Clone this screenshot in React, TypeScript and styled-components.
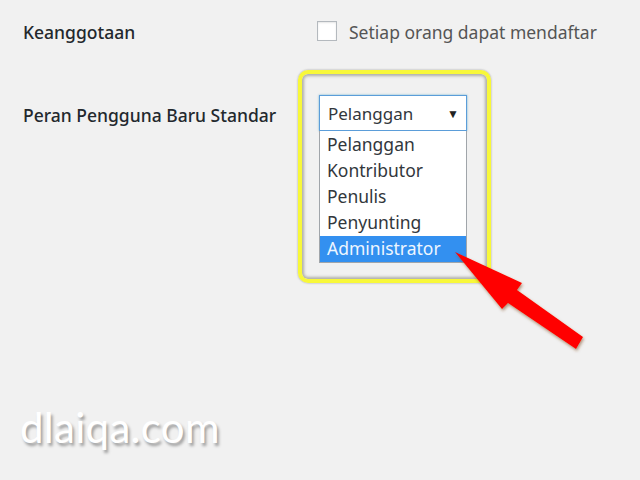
import React from 'react'
import styled, { createGlobalStyle } from 'styled-components'

const GlobalStyle = createGlobalStyle`
   html, body {
      margin: 0;
      padding: 0;
      background: #f1f1f1;
   }
   body {
      width: 640px;
      height: 480px;
      overflow: hidden;
      position: relative;
      font-family: "Noto Sans", "Open Sans", sans-serif;
   }
`

const Page = styled.div`
   position: relative;
   width: 640px;
   height: 480px;
   padding: 20px 0 0 23px;
   box-sizing: border-box;
`

const Row = styled.div<{ $top?: number }>`
   display: grid;
   grid-template-columns: 294px auto;
   align-items: center;
   height: ${(p) => (p.$top ? 36 : 24)}px;
   margin-top: ${(p) => p.$top ?? 0}px;
`

const Label = styled.div<{ $drop?: number }>`
   color: #23282d;
   font-size: 17.5px;
   font-weight: 500;
   line-height: 24px;
   padding-top: ${(p) => p.$drop ?? 0}px;
`

const CheckLabel = styled.label`
   display: flex;
   align-items: center;
   gap: 12px;
   color: #555;
   font-size: 17.5px;
   line-height: 24px;
`

const Checkbox = styled.span`
   width: 18px;
   height: 18px;
   margin-top: -2px;
   border: 1px solid #b4b9be;
   background: #fff;
   box-shadow: inset 0 1px 2px rgba(0, 0, 0, 0.1);
`

const SelectWrap = styled.div`
   position: relative;
   width: 148px;
   margin-left: 2px;

   &::before {
      content: '';
      position: absolute;
      left: -21px;
      top: -25px;
      width: 193px;
      height: 213px;
      box-sizing: border-box;
      border: 4px solid #f8f83a;
      border-radius: 10px;
      box-shadow: inset 0 0 3px 2px rgba(120, 120, 110, 0.55), 0 0 2px rgba(90, 90, 90, 0.6);
   }
`

const Select = styled.div`
   position: relative;
   height: 36px;
   box-sizing: border-box;
   display: flex;
   align-items: center;
   justify-content: space-between;
   padding: 0 7px 0 8px;
   border: 1px solid #5b9dd9;
   box-shadow: 0 0 2px rgba(30, 140, 190, 0.6);
   background: #fff;
   color: #32373c;
   font-size: 17px;
`

const Caret = styled.span`
   font-size: 12px;
   color: #222;
`

const Menu = styled.ul`
   position: absolute;
   left: 0;
   top: 36px;
   width: 148px;
   box-sizing: border-box;
   margin: 0;
   padding: 1px 0 0;
   list-style: none;
   background: #fff;
   border: 1px solid #a0a5aa;
   border-top: none;
`

const Option = styled.li<{ $active?: boolean }>`
   height: 26px;
   line-height: 25px;
   padding-left: 7px;
   font-size: 17.5px;
   color: ${(p) => (p.$active ? '#eef6ff' : '#32373c')};
   background: ${(p) => (p.$active ? '#3390f0' : 'transparent')};
`

const Pointer = styled.svg`
   position: absolute;
   left: 440px;
   top: 240px;
   overflow: visible;
`

const Watermark = styled.div`
   position: absolute;
   left: 20px;
   top: 402px;
   color: #fff;
   font-family: Lato, "Open Sans", sans-serif;
   font-size: 42px;
   letter-spacing: 0.3px;
   text-shadow: 2px 3px 3px rgba(0, 0, 0, 0.35);
`

const options = ['Pelanggan', 'Kontributor', 'Penulis', 'Penyunting', 'Administrator']

const App: React.FC = () => (
   <Page>
      <GlobalStyle />
      <Row>
         <Label>Keanggotaan</Label>
         <CheckLabel>
            <Checkbox />
            Setiap orang dapat mendaftar
         </CheckLabel>
      </Row>
      <Row $top={51}>
         <Label $drop={3}>Peran Pengguna Baru Standar</Label>
         <SelectWrap>
            <Select>
               Pelanggan
               <Caret>▼</Caret>
            </Select>
            <Menu>
               {options.map((o) => (
                  <Option key={o} $active={o === 'Administrator'}>
                     {o}
                  </Option>
               ))}
            </Menu>
         </SelectWrap>
      </Row>
      <Pointer width="160" height="120" viewBox="0 0 160 120">
         <defs>
            <filter id="sh" x="-20%" y="-20%" width="140%" height="140%">
               <feDropShadow dx="1" dy="2" stdDeviation="1.5" floodColor="#7a4a20" floodOpacity="0.55" />
            </filter>
         </defs>
         <polygon
            points="15,12 82,43 77,50 143,97 136,109 68,63 62,69"
            fill="#ff0000"
            filter="url(#sh)"
         />
      </Pointer>
      <Watermark>dlaiqa.com</Watermark>
   </Page>
)

export default App
